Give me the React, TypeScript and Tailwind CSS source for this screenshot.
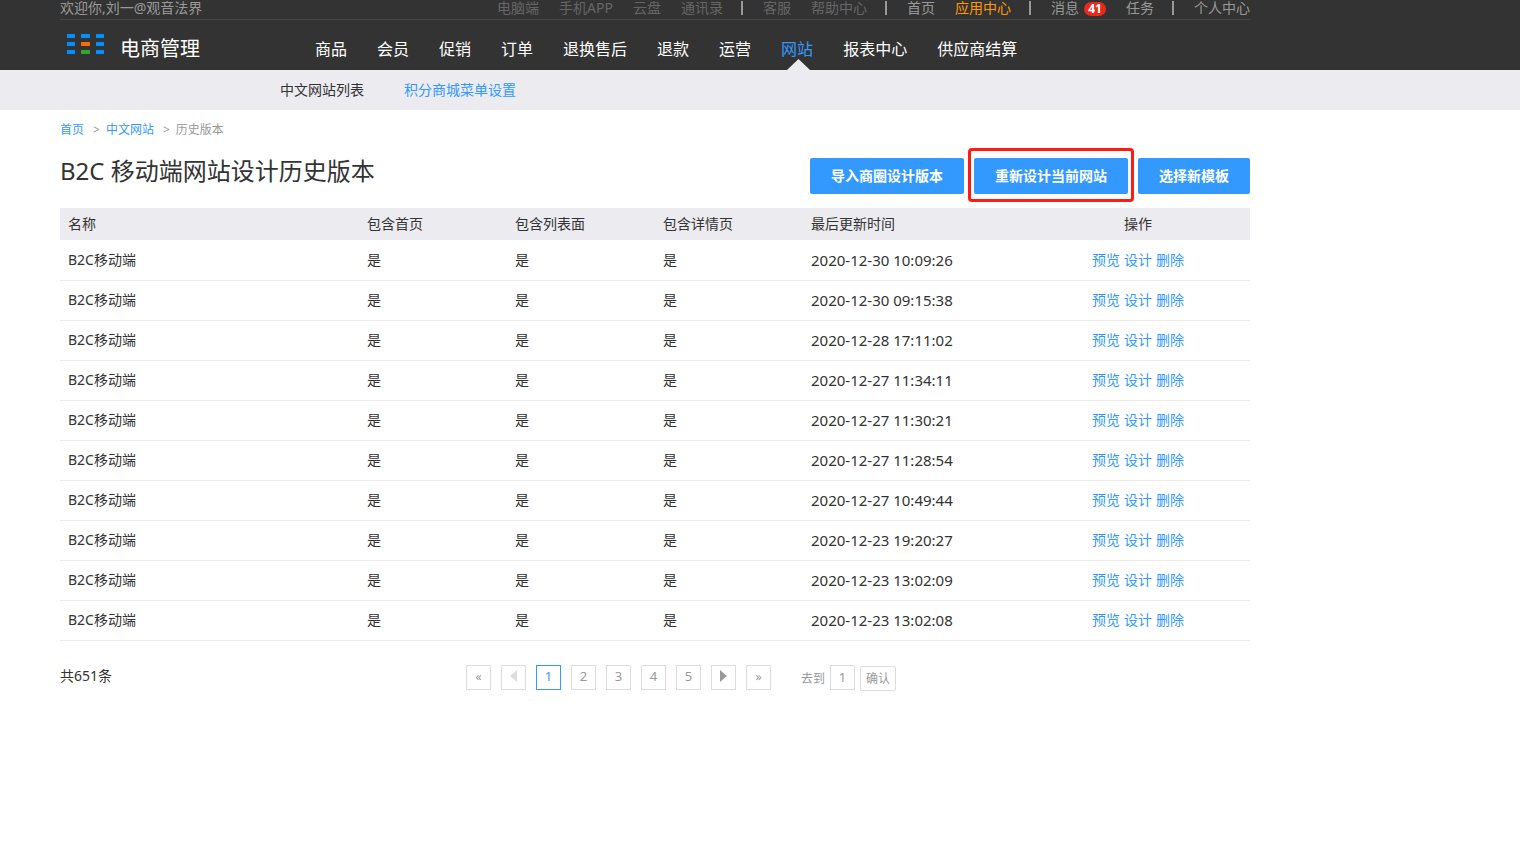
import { Fragment, useState } from 'react'
import clsx from 'clsx'

type TopLink = {
  label: string
  tone: 'dim' | 'normal' | 'accent'
  badge?: number
}

// each group is followed by a vertical bar
const topGroups: TopLink[][] = [
  [
    { label: '电脑端', tone: 'dim' },
    { label: '手机APP', tone: 'dim' },
    { label: '云盘', tone: 'dim' },
    { label: '通讯录', tone: 'dim' },
  ],
  [
    { label: '客服', tone: 'dim' },
    { label: '帮助中心', tone: 'dim' },
  ],
  [
    { label: '首页', tone: 'normal' },
    { label: '应用中心', tone: 'accent' },
  ],
  [
    { label: '消息', tone: 'normal', badge: 41 },
    { label: '任务', tone: 'normal' },
  ],
  [{ label: '个人中心', tone: 'normal' }],
]

const toneClass = {
  dim: 'text-[#666]',
  normal: 'text-[#999]',
  accent: 'text-[#ff9900]',
}

const menu = ['商品', '会员', '促销', '订单', '退换售后', '退款', '运营', '网站', '报表中心', '供应商结算']

const times = [
  '2020-12-30 10:09:26',
  '2020-12-30 09:15:38',
  '2020-12-28 17:11:02',
  '2020-12-27 11:34:11',
  '2020-12-27 11:30:21',
  '2020-12-27 11:28:54',
  '2020-12-27 10:49:44',
  '2020-12-23 19:20:27',
  '2020-12-23 13:02:09',
  '2020-12-23 13:02:08',
]

const Logo = () => (
  <svg width="38" height="20" viewBox="0 0 38 20" aria-hidden="true">
    {[0, 8, 16].map(y => (
      <Fragment key={y}>
        <rect x="0" y={y} width="8" height="4" rx="0.5" fill="#0090ff" />
        <rect x="14" y={y} width="9" height="4" rx="0.5" fill={y === 0 ? '#0090ff' : y === 8 ? '#ff6a00' : '#2fa832'} />
        <rect x="29" y={y} width="8" height="4" rx="0.5" fill="#0090ff" />
      </Fragment>
    ))}
  </svg>
)

const Header = () => (
  <header>
    <div className="bg-[#333]">
      <div className="ml-[60px] max-w-[1190px]">
        {/* Top links */}
        <div className="flex h-5 items-start justify-between border-b border-[#444] text-sm leading-4 text-[#999]">
          <span>欢迎你,刘一@观音法界</span>
          <div className="flex">
            {topGroups.map((group, i) => (
              <Fragment key={i}>
                {i > 0 && <span className="mt-px ml-[18px] h-3.5 w-0.5 bg-[#999]" />}
                {group.map(link => (
                  <a key={link.label} href="#" className={clsx('ml-5 flex', toneClass[link.tone])}>
                    {link.label}
                    {link.badge && (
                      <span className="mt-0.5 ml-[5px] h-3.5 w-[22px] rounded-full bg-[#e8291c] text-center text-xs leading-3.5 font-bold text-white">
                        {link.badge}
                      </span>
                    )}
                  </a>
                ))}
              </Fragment>
            ))}
          </div>
        </div>
        {/* Logo and main menu */}
        <div className="flex h-[50px]">
          <a href="#" className="flex w-[255px] items-start gap-[15px] pt-3.5 pl-[7px]">
            <Logo />
            <span className="text-xl leading-[30px] text-white">电商管理</span>
          </a>
          <nav className="flex gap-[30px] text-base leading-[58px] text-white">
            {menu.map(item => (
              <a key={item} href="#" className={clsx('relative h-full', item === '网站' && 'text-[#3399ff]')}>
                {item}
                {item === '网站' && (
                  <svg className="absolute bottom-0 left-1.5" width="23" height="11" viewBox="0 0 23 11">
                    <path d="M0 11L11.5 0L23 11Z" fill="#ebebf0" />
                  </svg>
                )}
              </a>
            ))}
          </nav>
        </div>
      </div>
    </div>
    <div className="bg-[#ebebf0]">
      <nav className="ml-[60px] flex max-w-[1190px] gap-10 pl-[220px] text-sm leading-10">
        <a href="#" className="text-[#333]">中文网站列表</a>
        <a href="#" className="text-[#3399ff]">积分商城菜单设置</a>
      </nav>
    </div>
  </header>
)

const blueButton = 'h-9 rounded-xs bg-[#3399ff] px-[21px] text-sm font-bold text-white'

const HistoryTable = () => (
  <table className="w-full table-fixed border-collapse text-sm text-[#333]">
    <colgroup>
      <col className="w-[299px]" />
      <col className="w-[148px]" />
      <col className="w-[148px]" />
      <col className="w-[148px]" />
      <col />
      <col className="w-56" />
    </colgroup>
    <thead>
      <tr className="h-8 bg-[#ebebf0] text-left *:px-2 *:font-normal">
        <th>名称</th>
        <th>包含首页</th>
        <th>包含列表面</th>
        <th>包含详情页</th>
        <th>最后更新时间</th>
        <th className="text-center">操作</th>
      </tr>
    </thead>
    <tbody>
      {times.map(time => (
        <tr key={time} className="h-10 border-b border-[#ebebeb] *:px-2">
          <td>B2C移动端</td>
          <td>是</td>
          <td>是</td>
          <td>是</td>
          <td className="text-[15px] leading-[18px]">{time}</td>
          <td>
            <div className="flex justify-center gap-1 text-[#3399ff]">
              <a href="#">预览</a>
              <a href="#">设计</a>
              <a href="#">删除</a>
            </div>
          </td>
        </tr>
      ))}
    </tbody>
  </table>
)

const pageBox = 'flex size-[25px] items-center justify-center border border-[#ddd]'

const Pagination = () => {
  const [page, setPage] = useState(1)
  const [target, setTarget] = useState('1')

  return (
    <div className="mt-6 flex text-xs text-[#999]">
      <span className="w-[406px] text-sm leading-[22px] text-[#333]">共651条</span>
      <div className="flex gap-2.5">
        <button className={pageBox} onClick={() => setPage(1)}>«</button>
        <button className={pageBox} aria-label="上一页" onClick={() => setPage(Math.max(1, page - 1))}>
          <svg className="mb-0.5" width="7" height="12" viewBox="0 0 7 12"><path d="M7 0V12L0 6Z" fill="#ddd" /></svg>
        </button>
        {[1, 2, 3, 4, 5].map(n => (
          <button
            key={n}
            className={clsx('flex size-[25px] items-center justify-center border text-[13px]', n === page ? 'border-[#3399ff] text-[#3399ff]' : 'border-[#ddd]')}
            onClick={() => setPage(n)}
          >
            {n}
          </button>
        ))}
        <button className={pageBox} aria-label="下一页" onClick={() => setPage(Math.min(5, page + 1))}>
          <svg className="mb-0.5" width="7" height="12" viewBox="0 0 7 12"><path d="M0 0V12L7 6Z" fill="#999" /></svg>
        </button>
        <button className={pageBox} onClick={() => setPage(5)}>»</button>
      </div>
      {/* Jump to page */}
      <form className="ml-[30px] flex items-start gap-[5px] leading-[27px]" onSubmit={e => e.preventDefault()}>
        <label htmlFor="target">去到</label>
        <input
          id="target"
          type="text"
          className="size-[25px] border border-[#ddd] pt-px text-center text-[13px]"
          value={target}
          onChange={e => setTarget(e.target.value)}
        />
        <button type="submit" className="mt-px h-[25px] w-9 rounded-xs border border-[#ddd] leading-[23px]">确认</button>
      </form>
    </div>
  )
}

const App = () => {
  return (
    <div className="min-h-screen bg-white font-['Noto_Sans','Noto_Sans_CJK_SC',sans-serif]">
      <Header />
      <main className="ml-[60px] max-w-[1190px]">
        <div className="flex text-xs leading-10 text-[#999]">
          <a href="#" className="text-[#3399ff]">首页</a>
          <span className="mr-1.5 ml-[9px]">&gt;</span>
          <a href="#" className="text-[#3399ff]">中文网站</a>
          <span className="mr-1.5 ml-[9px]">&gt;</span>
          <span>历史版本</span>
        </div>
        <div className="flex items-start justify-between pb-3.5">
          <h1 className="text-2xl leading-[42px] text-[#333]">B2C 移动端网站设计历史版本</h1>
          <div className="flex gap-2.5 pt-2">
            <button className={blueButton}>导入商圈设计版本</button>
            <div className="relative">
              <button className={blueButton}>重新设计当前网站</button>
              <span className="pointer-events-none absolute -inset-x-1.5 -top-2.5 -bottom-2 rounded-sm border-3 border-[#ff1a12]" />
            </div>
            <button className={blueButton}>选择新模板</button>
          </div>
        </div>
        <HistoryTable />
        <Pagination />
      </main>
    </div>
  )
}

export default App
